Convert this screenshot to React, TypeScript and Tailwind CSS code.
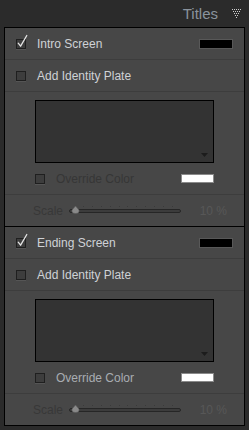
import React from 'react';

const FONT = { fontFamily: '"Liberation Sans", Arial, sans-serif' };

function Check({ checked }: { checked: boolean }) {
  return (
    <div className="relative h-[10px] w-[10px] shrink-0 border border-[#1f1f1f] bg-[#3d3d3d] shadow-[0_1px_0_#555555]">
      {checked && (
        <svg className="absolute -left-[1px] -top-[7px] overflow-visible" width="13" height="16" viewBox="0 0 13 16">
          <path d="M2.2 10.2 L4.6 13.2 L10.8 2.5" stroke="#e4e4e4" strokeWidth="1.3" fill="none" strokeLinejoin="round" strokeLinecap="round" />
        </svg>
      )}
    </div>
  );
}

function DotTriangle() {
  const dots: React.ReactNode[] = [];
  const rows = [5, 4, 3, 2, 1];
  rows.forEach((n, r) => {
    for (let i = 0; i < n; i++) {
      dots.push(<rect key={`${r}-${i}`} x={r + i * 2} y={r * 2} width="1" height="1" fill="#cfcfcf" />);
    }
  });
  return (
    <svg width="10" height="10" viewBox="0 0 10 10" className="block">
      {dots}
    </svg>
  );
}

function Slider() {
  const ticks = Array.from({ length: 11 });
  return (
    <div className="relative h-[10px] w-[112px]">
      <div className="absolute left-[14px] right-[8px] top-0 flex justify-between">
        {ticks.map((_, i) => (
          <div key={i} className="h-[1px] w-[1px] bg-[#3a3a3a]" />
        ))}
      </div>
      <div className="absolute left-0 right-0 top-[3px] h-[4px] rounded-full border border-[#262626] bg-[#3c3c3c]" />
      <svg className="absolute left-[2px] top-0" width="9" height="8" viewBox="0 0 9 8">
        <path d="M4.5 0 L8 4 Q8.5 7.5 4.5 7.5 Q0.5 7.5 1 4 Z" fill="#8a8a8a" stroke="#5a5a5a" strokeWidth="0.6" />
      </svg>
    </div>
  );
}

function Section({ title, overrideOn }: { title: string; overrideOn: boolean }) {
  return (
    <div className="flex flex-col border-b border-black bg-[#474747]">
      <div className="flex h-[31px] items-center pl-[11px] pr-[11px]">
        <Check checked />
        <span className="ml-[11px] text-[12px] text-[#cfd2d6]">{title}</span>
        <div className="ml-auto h-[10px] w-[34px] border border-[#585858] bg-black" />
      </div>
      <div className="h-[1px] bg-[#3d3d3d]" />
      <div className="flex h-[31px] items-center pl-[11px]">
        <Check checked={false} />
        <span className="ml-[11px] text-[12px] text-[#cfd2d6]">Add Identity Plate</span>
      </div>
      <div className="h-[1px] bg-[#3d3d3d]" />
      <div className="flex h-[102px] w-[239px] flex-col pl-[30px] pt-[8px]">
        <div className="relative h-[63px] w-[179px] border border-black bg-[#333333]">
          <svg className="absolute bottom-[5px] right-[5px]" width="7" height="4" viewBox="0 0 7 4">
            <path d="M0 0 H7 L3.5 4 Z" fill="#1c1c1c" />
          </svg>
        </div>
        <div className="mt-[9px] flex h-[13px] w-[179px] items-center">
          <Check checked={false} />
          <span className={`ml-[11px] text-[12px] ${overrideOn ? 'text-[#a9adb2]' : 'text-[#363636]'}`}>Override Color</span>
          <div className="ml-auto h-[9px] w-[33px] border border-[#8a8a8a] bg-white" />
        </div>
      </div>
      <div className="h-[1px] bg-[#3d3d3d]" />
      <div className="flex h-[31px] items-center pl-[28px] pr-[17px]">
        <span className="w-[36px] text-[12px] text-[#383838]">Scale</span>
        <Slider />
        <span className="ml-auto text-[12px] text-[#575757]">10 %</span>
      </div>
    </div>
  );
}

export default function App() {
  return (
    <div className="h-[430px] w-[249px] bg-[#2b2b2b]" style={FONT}>
      <div className="flex h-[27px] items-center justify-end pr-[7px]">
        <span className="text-[15px] leading-none text-[#8a939d]">Titles</span>
        <div className="ml-[14px] mt-[1px]">
          <DotTriangle />
        </div>
      </div>
      <div className="mx-[4px] border-x border-t border-black">
        <Section title="Intro Screen" overrideOn={false} />
        <Section title="Ending Screen" overrideOn />
      </div>
    </div>
  );
}
